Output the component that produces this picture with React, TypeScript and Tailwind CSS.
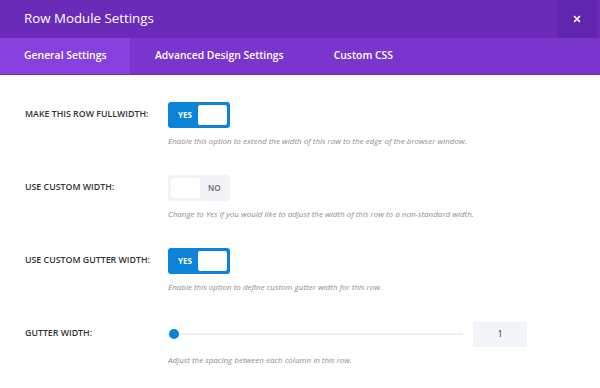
import { X } from "lucide-react";

const font = { fontFamily: '"Open Sans", "Noto Sans", sans-serif' };

const Toggle = ({ on }: { on: boolean }) =>
  on ? (
    <div className="flex h-[26px] w-[62px] items-center rounded-[3px] bg-[#0c83d9] p-[3px]">
      <span className="flex-1 pl-[7px] text-[8px] font-bold text-white">YES</span>
      <span className="h-full w-[29px] rounded-[2px] bg-white" />
    </div>
  ) : (
    <div className="flex h-[26px] w-[62px] items-center rounded-[3px] bg-[#f1f3f7] p-[3px]">
      <span className="h-full w-[29px] rounded-[2px] bg-white" />
      <span className="flex-1 pl-[8px] text-[8px] font-semibold text-[#666]">NO</span>
    </div>
  );

const Row = ({ label, help, children }: { label: string; help: string; children: React.ReactNode }) => (
  <div className="flex">
    <div className="flex h-[26px] w-[168px] shrink-0 items-center pl-[25px] text-[8.8px] font-semibold uppercase text-[#333]">
      {label}
    </div>
    <div className="flex-1">
      {children}
      <p className="mt-[7px] text-[8px] italic text-[#8e8e8e]">{help}</p>
    </div>
  </div>
);

export default function App() {
  return (
    <div style={font} className="h-[388px] w-[600px] overflow-hidden bg-white">
      <header className="flex h-[38px] items-center justify-between bg-[#6b2bb9]">
        <h1 className="pl-[24px] text-[13.3px] text-white">Row Module Settings</h1>
        <div className="mr-[3px] flex h-full w-[40px] items-center justify-center bg-[#6126ad]">
          <X className="h-[10px] w-[10px] text-white" strokeWidth={4} />
        </div>
      </header>
      <nav className="flex h-[37px] border-b border-[#6d2bbb] bg-[#7b35cf] text-[10.4px] font-semibold text-white">
        <div className="flex w-[130px] items-center bg-[#8540de] pl-[24px]">General Settings</div>
        <div className="flex items-center pl-[25px]">Advanced Design Settings</div>
        <div className="flex items-center pl-[50px]">Custom CSS</div>
      </nav>

      <div className="flex flex-col gap-[28px] pt-[27px]">
        <Row
          label="Make this row fullwidth:"
          help="Enable this option to extend the width of this row to the edge of the browser window."
        >
          <Toggle on />
        </Row>
        <Row
          label="Use custom width:"
          help="Change to Yes if you would like to adjust the width of this row to a non-standard width."
        >
          <Toggle on={false} />
        </Row>
        <Row label="Use custom gutter width:" help="Enable this option to define custom gutter width for this row.">
          <Toggle on />
        </Row>
        <Row label="Gutter width:" help="Adjust the spacing between each column in this row.">
          <div className="flex h-[26px] items-center">
            <div className="relative flex h-[26px] w-[295px] items-center">
              <div className="h-[2px] w-full bg-[#eef1f5]" />
              <span className="absolute left-[1px] h-[10px] w-[10px] rounded-full bg-[#0c83d9]" />
            </div>
            <div className="ml-[10px] flex h-[25px] w-[54px] items-center justify-center bg-[#f1f4f8] text-[9px] text-[#333]">
              1
            </div>
          </div>
        </Row>
      </div>
    </div>
  );
}
